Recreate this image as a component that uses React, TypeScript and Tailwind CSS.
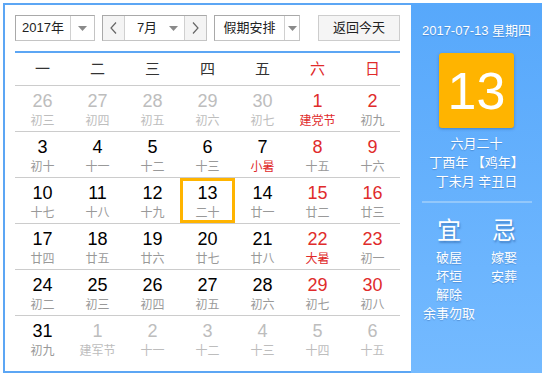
import React from "react";

type Day = { n: number; l: string; other?: boolean; red?: boolean; hol?: boolean; sel?: boolean };

const rows: Day[][] = [
  [
    { n: 26, l: "初三", other: true },
    { n: 27, l: "初四", other: true },
    { n: 28, l: "初五", other: true },
    { n: 29, l: "初六", other: true },
    { n: 30, l: "初七", other: true },
    { n: 1, l: "建党节", red: true, hol: true },
    { n: 2, l: "初九", red: true },
  ],
  [
    { n: 3, l: "初十" },
    { n: 4, l: "十一" },
    { n: 5, l: "十二" },
    { n: 6, l: "十三" },
    { n: 7, l: "小暑", hol: true },
    { n: 8, l: "十五", red: true },
    { n: 9, l: "十六", red: true },
  ],
  [
    { n: 10, l: "十七" },
    { n: 11, l: "十八" },
    { n: 12, l: "十九" },
    { n: 13, l: "二十", sel: true },
    { n: 14, l: "廿一" },
    { n: 15, l: "廿二", red: true },
    { n: 16, l: "廿三", red: true },
  ],
  [
    { n: 17, l: "廿四" },
    { n: 18, l: "廿五" },
    { n: 19, l: "廿六" },
    { n: 20, l: "廿七" },
    { n: 21, l: "廿八" },
    { n: 22, l: "大暑", red: true, hol: true },
    { n: 23, l: "初一", red: true },
  ],
  [
    { n: 24, l: "初二" },
    { n: 25, l: "初三" },
    { n: 26, l: "初四" },
    { n: 27, l: "初五" },
    { n: 28, l: "初六" },
    { n: 29, l: "初七", red: true },
    { n: 30, l: "初八", red: true },
  ],
  [
    { n: 31, l: "初九" },
    { n: 1, l: "建军节", other: true },
    { n: 2, l: "十一", other: true },
    { n: 3, l: "十二", other: true },
    { n: 4, l: "十三", other: true },
    { n: 5, l: "十四", other: true },
    { n: 6, l: "十五", other: true },
  ],
];

const weekdays = ["一", "二", "三", "四", "五", "六", "日"];

function Caret() {
  return (
    <svg width="9" height="5" viewBox="0 0 9 5">
      <polygon points="0,0 9,0 4.5,5" fill="#8a8a8a" />
    </svg>
  );
}

function Chevron({ dir }: { dir: "l" | "r" }) {
  return (
    <svg width="7" height="12" viewBox="0 0 7 12">
      <polyline
        points={dir === "l" ? "6,0.5 1,6 6,11.5" : "1,0.5 6,6 1,11.5"}
        fill="none"
        stroke="#666"
        strokeWidth="1.2"
      />
    </svg>
  );
}

export default function App() {
  const font = { fontFamily: '"Liberation Sans", "Noto Sans CJK SC", sans-serif' };
  return (
    <div className="w-[545px] h-[375px] bg-white pt-[3px] pl-[3px]" style={font}>
      <div className="flex h-[370px] w-[539px]">
        {/* Left calendar */}
        <div className="w-[408px] h-full border-l-2 border-t-2 border-b-2 border-[#5ca6f4] pl-[10px] pt-[10px] bg-white">
          <div className="w-[385px]">
            {/* toolbar */}
            <div className="flex h-[26px] text-[13px] text-[#222]">
              <div className="flex w-[80px] h-full border border-[#c4c4c4] border-t-[#a9a9a9] border-l-[#a9a9a9] bg-white">
                <div className="w-[55px] flex items-center justify-center border-r border-[#d0d0d0]">2017年</div>
                <div className="flex-1 flex items-center justify-center"><Caret /></div>
              </div>
              <div className="flex w-[105px] h-full ml-[7px] border border-[#c4c4c4] border-t-[#a9a9a9] border-l-[#a9a9a9]">
                <div className="w-[22px] flex items-center justify-center bg-[#f4f4f4] border-r border-[#d0d0d0]"><Chevron dir="l" /></div>
                <div className="w-[60px] flex items-center bg-white border-r border-[#d0d0d0]">
                  <span className="w-[44px] text-center">7月</span>
                  <Caret />
                </div>
                <div className="flex-1 flex items-center justify-center bg-[#f4f4f4]"><Chevron dir="r" /></div>
              </div>
              <div className="flex w-[86px] h-full ml-[7px] border border-[#c4c4c4] border-t-[#a9a9a9] border-l-[#a9a9a9] bg-white">
                <div className="w-[70px] flex items-center justify-center border-r border-[#d0d0d0]">假期安排</div>
                <div className="flex-1 flex items-center justify-center"><Caret /></div>
              </div>
              <div className="w-[82px] h-full ml-[18px] flex items-center justify-center border border-[#cdcdcd] bg-[#f5f5f5]">返回今天</div>
            </div>
            <div className="mt-[10px] h-[2px] bg-[#5ca6f4]" />
            {/* weekdays */}
            <div className="grid grid-cols-7 h-[33px] border-b border-[#cccccc] text-[15px]">
              {weekdays.map((w, i) => (
                <div key={w} className={`flex items-center justify-center ${i >= 5 ? "text-[#e02b2b]" : "text-[#333]"}`}>
                  {w}
                </div>
              ))}
            </div>
            {/* days */}
            {rows.map((row, ri) => (
              <div key={ri} className={`grid grid-cols-7 h-[46px] ${ri < 5 ? "border-b border-[#cccccc]" : ""}`}>
                {row.map((d, ci) => {
                  const numColor = d.other ? "text-[#bdbdbd]" : d.red ? "text-[#e02b2b]" : "text-black";
                  const lunColor = d.other ? "text-[#bdbdbd]" : d.hol ? "text-[#e02b2b]" : "text-[#999999]";
                  return (
                    <div
                      key={ci}
                      className={`flex flex-col items-center ${d.sel ? "border-[3px] border-[#ffb400] pt-[2px]" : "pt-[5px]"}`}
                    >
                      <div className={`text-[18px] leading-[20px] ${numColor}`}>{d.n}</div>
                      <div className={`mt-[3px] text-[12px] leading-[14px] ${lunColor}`}>{d.l}</div>
                    </div>
                  );
                })}
              </div>
            ))}
          </div>
        </div>
        {/* Right panel */}
        <div className="w-[131px] h-full bg-gradient-to-b from-[#57a8fb] to-[#74baff] flex flex-col items-center text-white [text-shadow:0_1px_1px_rgba(0,40,100,0.25)]">
          <div className="mt-[19px] text-[13px] leading-[18px]">2017-07-13 星期四</div>
          <div className="mt-[13px] w-[75px] h-[75px] rounded-[3px] bg-[#ffb400] shadow-[0_1px_3px_rgba(0,50,120,0.35)] flex items-center justify-center text-[52px] leading-none [text-shadow:none]">
            13
          </div>
          <div className="mt-[6px] text-[13px] leading-[19px] text-center">
            <div>六月二十</div>
            <div>丁酉年 【鸡年】</div>
            <div>丁未月 辛丑日</div>
          </div>
          <div className="mt-[10px] w-[110px] h-[2px] bg-[#93c8fb]" />
          <div className="mt-[14px] grid grid-cols-2 w-[110px]">
            <div className="flex flex-col items-center">
              <div className="text-[24px] leading-[28px] [text-shadow:1px_2px_2px_rgba(0,40,100,0.35)]">宜</div>
              <div className="mt-[4px] text-[13px] leading-[18.5px] text-center whitespace-nowrap">
                <div>破屋</div>
                <div>坏垣</div>
                <div>解除</div>
                <div>余事勿取</div>
              </div>
            </div>
            <div className="flex flex-col items-center">
              <div className="text-[24px] leading-[28px] [text-shadow:1px_2px_2px_rgba(0,40,100,0.35)]">忌</div>
              <div className="mt-[4px] text-[13px] leading-[18.5px] text-center">
                <div>嫁娶</div>
                <div>安葬</div>
              </div>
            </div>
          </div>
        </div>
      </div>
    </div>
  );
}
